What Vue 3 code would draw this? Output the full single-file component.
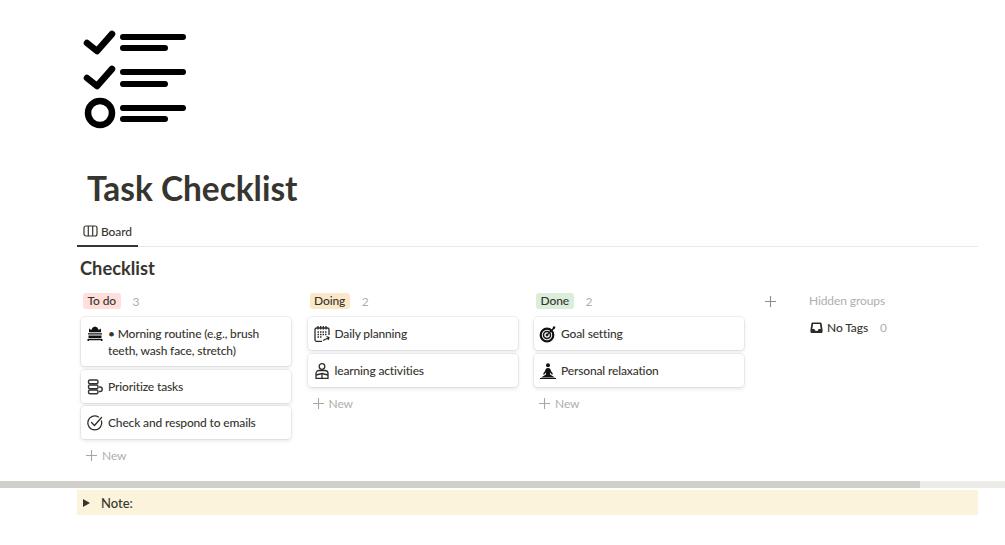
<template>
  <div class="page">
    <header class="hero">
      <svg class="hero-icon" width="110" height="110" viewBox="0 0 110 110" fill="none" stroke="#000" stroke-linecap="round" stroke-linejoin="round">
        <path d="M5 18l10 8 15-17" stroke-width="6.500" />
        <path d="M5 53l10 8 15-17" stroke-width="6.500" />
        <circle cx="18" cy="88" r="12" stroke-width="6.500" />
        <path d="M41 12h60M41 23h42M41 47h60M41 59h42M41 83h60M41 94h42" stroke-width="6" />
      </svg>
      <h1 class="title">Task Checklist</h1>
    </header>

    <nav class="tabs">
      <div class="tab">
        <svg width="15" height="15" viewBox="0 0 15 15" fill="none" stroke="#37352f" stroke-width="1.200">
          <rect x="1" y="2" width="13" height="10" rx="2" />
          <path d="M5.300 2v10M9.700 2v10" />
        </svg>
        <span>Board</span>
      </div>
    </nav>

    <h2 class="heading">Checklist</h2>

    <div class="board">
      <section v-for="col in columns" :key="col.name" class="column">
        <div class="col-head">
          <span class="pill" :class="col.tone">{{ col.name }}</span>
          <span class="count">{{ col.cards.length }}</span>
        </div>
        <article v-for="card in col.cards" :key="card.text" class="card">
          <svg class="card-icon" width="18" height="18" viewBox="0 0 18 18" v-html="card.icon"></svg>
          <p class="card-text">{{ card.text }}</p>
        </article>
        <div class="new-row">
          <svg class="plus" width="11" height="11" viewBox="0 0 11 11" stroke="#a8a6a1" stroke-width="1.100"><path d="M5.500 0v11M0 5.500h11" /></svg>
          New
        </div>
      </section>

      <div class="add-col">
        <svg width="11" height="11" viewBox="0 0 11 11" stroke="#8f8d88" stroke-width="1.100"><path d="M5.500 0v11M0 5.500h11" /></svg>
      </div>

      <aside class="hidden-col">
        <div class="hidden-title">Hidden groups</div>
        <div class="hidden-row">
          <svg width="13" height="13" viewBox="0 0 14 14">
            <path d="M3 1.500h8a1.500 1.500 0 0 1 1.500 1.300l1 6.700v2.200a1.300 1.300 0 0 1-1.300 1.300H1.800a1.300 1.300 0 0 1-1.300-1.300V9.500l1-6.700A1.500 1.500 0 0 1 3 1.500z" fill="#2b2a27" />
            <path d="M3.300 3.200h7.400l.8 5.300H9.200a2.200 2.200 0 0 1-4.400 0H2.500z" fill="#fff" />
          </svg>
          <span class="hidden-name">No Tags</span>
          <span class="hidden-count">0</span>
        </div>
      </aside>
    </div>

    <div class="scrollbar"><div class="thumb"></div></div>

    <div class="note">
      <span class="caret"></span>
      <span>Note:</span>
    </div>
  </div>
</template>

<script setup>
const icons = {
  bed: '<path d="M3 7.300V3.500l2.200 1.500L6.700 2.500 9 1.500l2.300 1L12.800 5 15 3.500v3.800z" fill="#111"/><path d="M2 8.300h14v1.200H2zM2.500 10.500h13v2.800h-13zM1.500 14h15v2h-1.500v-.8H3v.8H1.500z" fill="#111"/>',
  stack: '<g fill="none" stroke="#333" stroke-width="1.400"><rect x="2.500" y="2" width="9.500" height="3.800" rx="1.500"/><rect x="2.500" y="7" width="9.500" height="3.800" rx="1.500"/><rect x="2.500" y="12" width="9.500" height="3.800" rx="1.500"/><path d="M13 9h1a2 2 0 0 1 0 4.500h-1"/></g>',
  check: '<g fill="none" stroke="#2c2c2a" stroke-width="1.300" stroke-linecap="round"><path d="M15.500 7A7 7 0 1 1 12.500 3"/><path d="M5.500 8.500l3 3 7-8"/></g>',
  calendar: '<g fill="none" stroke="#2c2c2a" stroke-width="1.300"><path d="M9 16.300H3.500A1.500 1.500 0 0 1 2 14.800v-10.300A1.500 1.500 0 0 1 3.500 3h11A1.500 1.500 0 0 1 16 4.500V10"/><path d="M5 1v3.500M7.700 1v3.500M10.300 1v3.500M13 1v3.500"/><path d="M4.500 7h9M4.500 9.500h9M4.500 12h5" stroke-dasharray="1.500 1"/><path d="M10 15.500l6-3M13.500 11.500l2.500 1-1 2.500"/></g>',
  reader: '<g fill="none" stroke="#2c2c2a" stroke-width="1.300"><circle cx="9" cy="4.500" r="2.800"/><path d="M6 8.500h6a3 3 0 0 1 3 3v4.800H3v-4.800a3 3 0 0 1 3-3z"/><path d="M9 11.500v4.800M3 13l6-1.500 6 1.500"/></g>',
  target: '<g fill="none" stroke="#111"><circle cx="8" cy="10" r="6.300" stroke-width="2.200"/><circle cx="8" cy="10" r="3.500" stroke-width="1.500"/><circle cx="8" cy="10" r="1" fill="#111"/><path d="M8 10l6.500-6.500" stroke-width="1.200"/></g><path d="M14 1.500l2.500 0-.8 2.500-2.200.5z" fill="#111"/>',
  yoga: '<circle cx="9" cy="3.300" r="2" fill="#111"/><path d="M9 6c-2 0-2.500 1-3 3l-2 3 1 .7 2-2.200v2L2 15.500h14L11 12.500v-2l2 2.200 1-.7-2-3c-.5-2-1-3-3-3z" fill="#111"/><path d="M1 16h16v1H1z" fill="#111"/>'
}

const columns = [
  {
    name: 'To do',
    tone: 'red',
    cards: [
      { text: '• Morning routine (e.g., brush teeth, wash face, stretch)', icon: icons.bed },
      { text: 'Prioritize tasks', icon: icons.stack },
      { text: 'Check and respond to emails', icon: icons.check }
    ]
  },
  {
    name: 'Doing',
    tone: 'yellow',
    cards: [
      { text: 'Daily planning', icon: icons.calendar },
      { text: 'learning activities', icon: icons.reader }
    ]
  },
  {
    name: 'Done',
    tone: 'green',
    cards: [
      { text: 'Goal setting', icon: icons.target },
      { text: 'Personal relaxation', icon: icons.yoga }
    ]
  }
]
</script>

<style>
html,
body {
  margin: 0;
  background: #fff;
  overflow: hidden;
}
</style>

<style scoped>
.page {
  width: 1005px;
  height: 545px;
  overflow: hidden;
  font-family: "Lato", "Open Sans", sans-serif;
  color: #37352f;
  padding-top: 25px;
  box-sizing: border-box;
}

.hero {
  padding-left: 82px;
}

.hero-icon {
  display: block;
}

.title {
  margin: 31px 0 0 5px;
  font-size: 33.400px;
  line-height: 44px;
  font-weight: 700;
}

.tabs {
  margin: 7px 27px 0 77px;
  height: 30px;
  border-bottom: 1px solid #e9e9e7;
  box-sizing: border-box;
  display: flex;
}

.tab {
  display: flex;
  align-items: center;
  gap: 3px;
  width: 61px;
  box-sizing: border-box;
  padding: 0 0 0 6px;
  font-size: 12px;
  letter-spacing: -0.1px;
  font-weight: 500;
  border-bottom: 2px solid #37352f;
  height: 30px;
}

.heading {
  margin: 9px 0 0 80px;
  font-size: 18.300px;
  line-height: 24px;
  font-weight: 700;
}

.board {
  display: flex;
  align-items: flex-start;
  margin: 13px 0 0 81px;
  height: 188px;
}

.column {
  width: 210px;
  margin-right: 16.500px;
  flex: none;
}

.col-head {
  display: flex;
  align-items: center;
  height: 16px;
  padding-left: 2px;
  margin-bottom: 8px;
  font-size: 12px;
  letter-spacing: -0.1px;
}

.pill {
  padding: 0 4.500px;
  line-height: 16px;
  border-radius: 3px;
  font-weight: 500;
}

.red { background: #ffdfdc; }
.yellow { background: #fbe8c8; }
.green { background: #dbeddb; }

.count {
  margin-left: 12px;
  color: #b0aeaa;
}

.card {
  display: flex;
  align-items: flex-start;
  gap: 4px;
  background: #fff;
  border-radius: 4px;
  box-shadow: 0 0 0 1px rgba(15, 15, 15, 0.06), 0 2px 4px rgba(15, 15, 15, 0.1);
  padding: 8px 6px 7px 5px;
  min-height: 33px;
  margin-bottom: 3.500px;
  box-sizing: border-box;
}

.card-icon {
  flex: none;
  display: block;
}

.card-text {
  margin: 0;
  font-size: 12px;
  line-height: 17px;
  letter-spacing: -0.15px;
  font-weight: 500;
  white-space: pre-wrap;
}

.new-row {
  display: flex;
  align-items: center;
  height: 26px;
  padding-left: 5px;
  color: #b0aeaa;
  font-size: 12px;
  letter-spacing: -0.1px;
}

.plus {
  margin-right: 5px;
}

.add-col {
  width: 48.500px;
  padding-left: 4px;
  box-sizing: border-box;
  height: 16px;
  display: flex;
  align-items: center;
  flex: none;
}

.hidden-col {
  font-size: 12px;
  letter-spacing: -0.1px;
  color: #b0aeaa;
  flex: none;
}

.hidden-title {
  line-height: 16px;
  margin-bottom: 10px;
}

.hidden-row {
  display: flex;
  align-items: center;
  padding-left: 1px;
  line-height: 17px;
}

.hidden-name {
  margin-left: 4px;
  color: #37352f;
  font-weight: 500;
}

.hidden-count {
  margin-left: 12px;
}

.scrollbar {
  height: 7px;
  background: #ecebe7;
}

.thumb {
  width: 920px;
  height: 7px;
  background: #d0cfc9;
}

.note {
  margin: 2px 27px 0 77px;
  height: 25px;
  background: #fbf3db;
  display: flex;
  align-items: center;
  font-size: 13px;
  font-weight: 500;
  padding-left: 6px;
  gap: 11px;
}

.caret {
  width: 0;
  height: 0;
  border-left: 7px solid #37352f;
  border-top: 4px solid transparent;
  border-bottom: 4px solid transparent;
}
</style>
